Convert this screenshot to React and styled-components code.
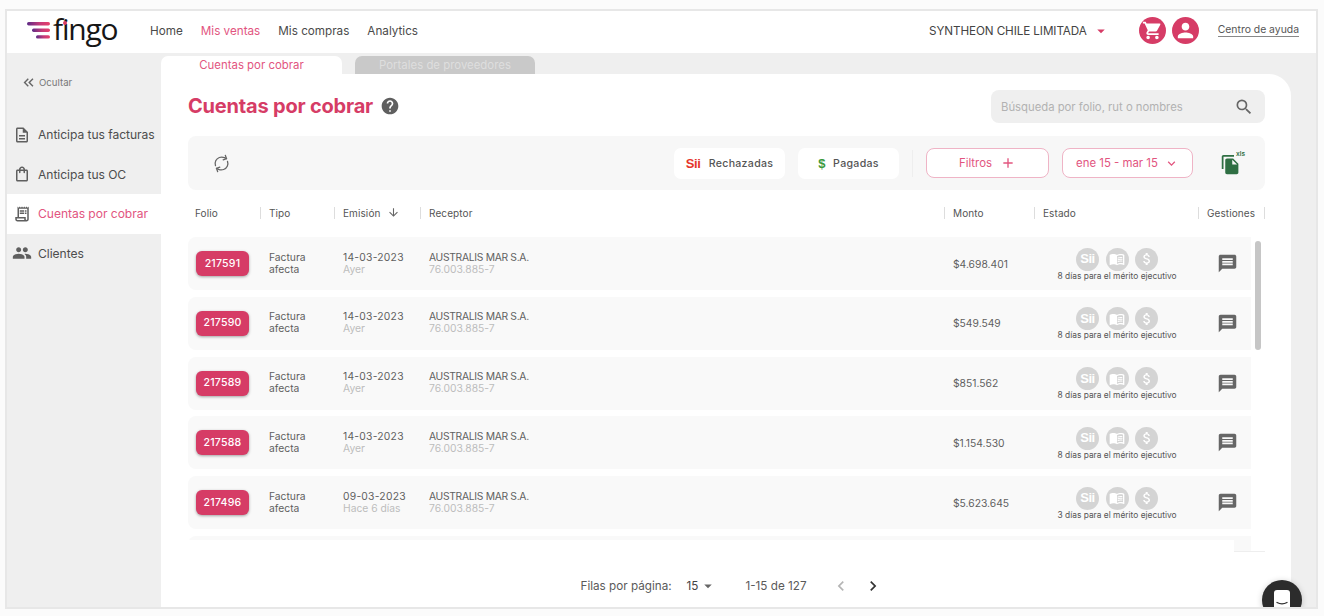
import React from 'react';
import styled, { createGlobalStyle } from 'styled-components';
import { RefreshCw } from 'lucide-react';
import {
  MdHelp, MdOutlineDescription, MdOutlineShoppingBag, MdOutlineReceiptLong, MdPeople,
  MdMessage, MdShoppingCart, MdPerson, MdKeyboardDoubleArrowLeft, MdSearch, MdArrowDownward,
  MdFileCopy, MdMenuBook, MdAttachMoney, MdArrowDropDown, MdExpandMore, MdAdd, MdChevronLeft, MdChevronRight,
} from 'react-icons/md';

const PINK = '#d63c66';
const SOFT_PINK = '#e2557f';

const GlobalStyle = createGlobalStyle`
  html, body {
    margin: 0;
    padding: 0;
    background: #fbfbfb;
    font-family: Inter, "Liberation Sans", sans-serif;
    overflow: hidden;
  }
  * { box-sizing: border-box; }
`;

const Frame = styled.div`
  position: relative;
  margin: 9px 0 0 5px;
  width: 1313px;
  height: 600px;
  border: 2px solid #e7e7e7;
  background: #efefef;
  display: flex;
  flex-direction: column;
  overflow: hidden;
`;

const Header = styled.header`
  height: 42px;
  flex: none;
  background: #fff;
  display: flex;
  align-items: center;
  padding: 0 17px 3px 20px;
`;

const Logo = styled.div`
  position: relative;
  display: flex;
  align-items: center;
  gap: 3px;
  width: 123px;
`;

const LogoText = styled.span`
  font-family: "Open Sans", sans-serif;
  font-size: 30px;
  line-height: 32px;
  letter-spacing: -1.2px;
  color: #161616;
  margin-top: -3px;
`;

const LogoDot = styled.i`
  position: absolute;
  left: 36px;
  top: 5px;
  width: 4px;
  height: 4px;
  border-radius: 50%;
  background: ${PINK};
`;

const Nav = styled.nav`
  display: flex;
  gap: 18px;
`;

const NavLink = styled.a`
  font-size: 11.7px;
  color: ${(p) => (p.$active ? SOFT_PINK : '#4a4a4a')};
`;

const HeaderRight = styled.div`
  margin-left: auto;
  display: flex;
  align-items: center;
`;

const Company = styled.div`
  display: flex;
  align-items: center;
  font-size: 11.7px;
  letter-spacing: -0.1px;
  color: #444;
  margin-right: 29px;
  svg { color: ${PINK}; margin-left: 5px; }
`;

const RoundIcon = styled.span`
  width: 27px;
  height: 27px;
  border-radius: 50%;
  background: ${PINK};
  color: #fff;
  display: flex;
  align-items: center;
  justify-content: center;
  margin-right: 6px;
`;

const HelpLink = styled.a`
  margin-left: 13px;
  font-size: 10.4px;
  color: #555;
  border-bottom: 1px solid #888;
  line-height: 12px;
`;

const Body = styled.div`
  flex: 1;
  display: flex;
  min-height: 0;
`;

const Sidebar = styled.aside`
  width: 154px;
  flex: none;
  padding-top: 19px;
`;

const HideButton = styled.div`
  display: flex;
  align-items: center;
  gap: 2px;
  padding-left: 13px;
  font-size: 9.6px;
  color: #777;
  height: 20px;
  margin-bottom: 23px;
  svg { color: #666; }
`;

const SideItem = styled.div`
  height: 39.5px;
  display: flex;
  align-items: center;
  gap: 7px;
  padding-left: 6px;
  font-size: 12.1px;
  letter-spacing: -0.05px;
  color: ${(p) => (p.$active ? SOFT_PINK : '#4d4d4d')};
  background: ${(p) => (p.$active ? '#fff' : 'transparent')};
  svg { color: #5f5f5f; flex: none; }
`;

const ClientsIcon = styled(MdPeople)`
  margin: 0 -1px;
`;

const Content = styled.div`
  width: 1130px;
  flex: none;
  display: flex;
  flex-direction: column;
  padding-top: 3px;
`;

const Tabs = styled.div`
  display: flex;
  gap: 13px;
  height: 18px;
  flex: none;
`;

const Tab = styled.div`
  width: ${(p) => (p.$active ? 181 : 180)}px;
  border-radius: 7px 7px 0 0;
  background: ${(p) => (p.$active ? '#fff' : '#c9c9c9')};
  color: ${(p) => (p.$active ? SOFT_PINK : '#dedede')};
  font-size: 11.4px;
  display: flex;
  align-items: center;
  justify-content: center;
`;

const Card = styled.main`
  flex: 1;
  min-height: 0;
  background: #fff;
  border-radius: 0 22px 0 0;
  padding: 16px 26px 0 27px;
  display: flex;
  flex-direction: column;
`;

const TitleRow = styled.div`
  display: flex;
  align-items: center;
  justify-content: space-between;
  height: 33px;
  flex: none;
`;

const Title = styled.h1`
  margin: -2px 0 0;
  display: flex;
  align-items: center;
  gap: 7px;
  font-size: 20px;
  font-weight: 700;
  letter-spacing: -0.2px;
  color: ${PINK};
  svg { color: #5f5f5f; }
`;

const Search = styled.div`
  width: 274px;
  height: 33px;
  border-radius: 8px;
  background: #efefef;
  display: flex;
  align-items: center;
  justify-content: space-between;
  padding: 0 11px 0 10px;
  font-size: 11.3px;
  color: #b2b2b2;
  svg { color: #666; }
`;

const Toolbar = styled.div`
  margin-top: 13px;
  height: 54px;
  flex: none;
  border-radius: 8px;
  background: #f7f7f7;
  display: flex;
  align-items: center;
  padding: 0 20px 0 25px;
  svg { flex: none; }
`;

const RefreshIcon = styled(RefreshCw)`
  color: #666;
  margin-right: auto;
  transform: rotate(-20deg);
`;

const QuickFilter = styled.div`
  height: 31px;
  width: ${(p) => p.$w}px;
  border-radius: 7px;
  background: #fff;
  margin-right: 13px;
  display: flex;
  align-items: center;
  justify-content: center;
  gap: 8px;
  font-size: 10.6px;
  font-weight: 500;
  letter-spacing: 0.3px;
  color: #555;
`;

const SiiMark = styled.b`
  font-family: "Liberation Sans", sans-serif;
  font-size: 13px;
  font-weight: 700;
  letter-spacing: -0.3px;
  color: ${(p) => p.$color};
`;

const Divider = styled.span`
  width: 1px;
  height: 27px;
  background: #eee;
  margin-right: 13px;
`;

const OutlineButton = styled.div`
  height: 30px;
  width: ${(p) => p.$w}px;
  border: 1.3px solid #efb4c6;
  border-radius: 8px;
  background: #fff;
  color: ${SOFT_PINK};
  margin-right: 13px;
  display: flex;
  align-items: center;
  justify-content: center;
  gap: ${(p) => p.$gap}px;
  font-size: 11.4px;
`;

const DateButton = styled(OutlineButton)`
  margin-right: 14px;
`;

const XlsIcon = styled.div`
  position: relative;
  width: 25px;
  height: 24px;
  margin-left: 13px;
  color: #2f6f43;
  display: flex;
  align-items: flex-end;
`;

const XlsLabel = styled.span`
  position: absolute;
  top: -1px;
  right: 0;
  font-size: 6.5px;
  font-weight: 600;
`;

const columns = '73px 74px 86px 524px 90px 164px';

const TableHead = styled.div`
  display: grid;
  grid-template-columns: ${columns} 66px;
  height: 47px;
  flex: none;
  align-items: center;
  padding-bottom: 2px;
`;

const HeadCell = styled.div`
  display: flex;
  align-items: center;
  gap: 6px;
  height: 12px;
  padding-left: ${(p) => (p.$first ? 7 : 8)}px;
  border-right: 1px solid #ddd;
  font-size: 10px;
  letter-spacing: 0.1px;
  color: #555;
  svg { color: #666; }
`;

const TableBody = styled.div`
  position: relative;
  height: 315px;
  flex: none;
  overflow: hidden;
`;

const Rows = styled.div`
  width: 1063px;
  display: flex;
  flex-direction: column;
  gap: 6.8px;
`;

const Row = styled.div`
  height: 53px;
  flex: none;
  border-radius: 8px 0 0 8px;
  background: #f9f9f9;
  display: grid;
  grid-template-columns: ${columns} 52px;
  align-items: center;
  font-size: 10.3px;
  line-height: 12px;
  color: #5f5f5f;
`;

const FolioCell = styled.div`
  padding-left: 8px;
`;

const FolioButton = styled.div`
  width: 53px;
  height: 25px;
  border-radius: 6px;
  background: ${PINK};
  color: #fff;
  font-size: 10.6px;
  font-weight: 500;
  letter-spacing: 0.2px;
  display: flex;
  align-items: center;
  justify-content: center;
  box-shadow: 0 1px 3px rgba(0, 0, 0, 0.35);
`;

const TextCell = styled.div`
  padding-left: 8px;
  margin-top: -2px;
  letter-spacing: ${(p) => p.$spacing || 0}px;
`;

const AmountCell = styled.div`
  padding-left: 8px;
`;

const SubText = styled.div`
  color: #bdbdbd;
  letter-spacing: 0;
`;

const StatusCell = styled.div`
  display: flex;
  flex-direction: column;
  align-items: center;
  padding-top: 1px;
`;

const StatusIcons = styled.div`
  display: flex;
  gap: 6.5px;
`;

const StatusIcon = styled.span`
  width: 23px;
  height: 23px;
  border-radius: 50%;
  background: #d4d4d4;
  color: #fff;
  display: flex;
  align-items: center;
  justify-content: center;
  font-family: "Liberation Sans", sans-serif;
  font-size: 13px;
  font-weight: 700;
  letter-spacing: -0.5px;
`;

const StatusText = styled.div`
  font-size: 8.4px;
  line-height: 10px;
  color: #555;
  white-space: nowrap;
`;

const ChatCell = styled.div`
  display: flex;
  justify-content: center;
  padding-left: 5px;
  color: #666;
`;

const ScrollThumb = styled.div`
  position: absolute;
  left: 1067px;
  top: 4px;
  width: 6px;
  height: 109px;
  border-radius: 3px;
  background: #c6c6c6;
`;

const FooterMask = styled.div`
  position: absolute;
  left: 0;
  bottom: 0;
  width: 1046px;
  height: 12px;
  background: #fff;
`;

const ScrollEnd = styled.div`
  position: absolute;
  right: 0;
  bottom: 0;
  width: 31px;
  height: 1px;
  background: #eee;
`;

const Pagination = styled.div`
  flex: 1;
  display: flex;
  align-items: center;
  justify-content: center;
  padding: 13px 0 0 10px;
  font-size: 11.7px;
  color: #5a5a5a;
`;

const PageSize = styled.span`
  display: flex;
  align-items: center;
  margin: 0 28px 0 15px;
  color: #444;
  svg { color: #666; margin-left: 1px; }
`;

const PageArrow = styled.span`
  display: flex;
  margin-left: ${(p) => p.$gap}px;
  color: ${(p) => (p.$off ? '#b5b5b5' : '#333')};
`;

const ChatBubble = styled.div`
  position: absolute;
  right: 14px;
  bottom: -13px;
  width: 40px;
  height: 40px;
  border-radius: 50%;
  background: #2c2c2c;
  box-shadow: 0 1px 6px rgba(0, 0, 0, 0.2);
  display: flex;
  justify-content: center;
  padding-top: 10px;
`;

const rows = [
  { folio: '217591', date: '14-03-2023', when: 'Ayer', amount: '$4.698.401', days: 8 },
  { folio: '217590', date: '14-03-2023', when: 'Ayer', amount: '$549.549', days: 8 },
  { folio: '217589', date: '14-03-2023', when: 'Ayer', amount: '$851.562', days: 8 },
  { folio: '217588', date: '14-03-2023', when: 'Ayer', amount: '$1.154.530', days: 8 },
  { folio: '217496', date: '09-03-2023', when: 'Hace 6 días', amount: '$5.623.645', days: 3 },
];

function LogoStripes() {
  return (
    <svg width="23" height="17" viewBox="0 0 23 17">
      <defs>
        <linearGradient id="stripe" x1="0" x2="1" y1="0" y2="0">
          <stop offset="0" stopColor="#5b2a86" />
          <stop offset="0.55" stopColor="#c43a78" />
          <stop offset="1" stopColor="#e8406a" />
        </linearGradient>
      </defs>
      <rect x="0" y="0" width="23" height="3.4" rx="1.7" fill="url(#stripe)" />
      <rect x="5" y="6.6" width="18" height="3.4" rx="1.7" fill="url(#stripe)" />
      <rect x="9" y="13.2" width="14" height="3.4" rx="1.7" fill="url(#stripe)" />
    </svg>
  );
}

function BubbleIcon() {
  return (
    <svg width="16" height="24" viewBox="0 0 16 24">
      <rect width="16" height="24" rx="3" fill="#fff" />
      <path d="M3 12.5c3 1.6 7 1.6 10 0" fill="none" stroke="#2c2c2c" strokeWidth="1.3" strokeLinecap="round" />
    </svg>
  );
}

function App() {
  return (
    <>
      <GlobalStyle />
      <Frame>
        <Header>
          <Logo>
            <LogoStripes />
            <LogoText>fingo</LogoText>
            <LogoDot />
          </Logo>
          <Nav>
            <NavLink>Home</NavLink>
            <NavLink $active>Mis ventas</NavLink>
            <NavLink>Mis compras</NavLink>
            <NavLink>Analytics</NavLink>
          </Nav>
          <HeaderRight>
            <Company>
              SYNTHEON CHILE LIMITADA <MdArrowDropDown size={18} />
            </Company>
            <RoundIcon><MdShoppingCart size={21} /></RoundIcon>
            <RoundIcon><MdPerson size={23} /></RoundIcon>
            <HelpLink>Centro de ayuda</HelpLink>
          </HeaderRight>
        </Header>
        <Body>
          <Sidebar>
            <HideButton><MdKeyboardDoubleArrowLeft size={17} /> Ocultar</HideButton>
            <SideItem><MdOutlineDescription size={18} /> Anticipa tus facturas</SideItem>
            <SideItem><MdOutlineShoppingBag size={18} /> Anticipa tus OC</SideItem>
            <SideItem $active><MdOutlineReceiptLong size={18} /> Cuentas por cobrar</SideItem>
            <SideItem><ClientsIcon size={20} /> Clientes</SideItem>
          </Sidebar>
          <Content>
            <Tabs>
              <Tab $active>Cuentas por cobrar</Tab>
              <Tab>Portales de proveedores</Tab>
            </Tabs>
            <Card>
              <TitleRow>
                <Title>Cuentas por cobrar <MdHelp size={20} /></Title>
                <Search>Búsqueda por folio, rut o nombres <MdSearch size={20} /></Search>
              </TitleRow>
              <Toolbar>
                <RefreshIcon size={17} strokeWidth={1.8} />
                <QuickFilter $w={111}><SiiMark $color="#e5342a">Sii</SiiMark> Rechazadas</QuickFilter>
                <QuickFilter $w={101}><SiiMark $color="#3c9a3c">$</SiiMark> Pagadas</QuickFilter>
                <Divider />
                <OutlineButton $w={123} $gap={8}>Filtros <MdAdd size={16} /></OutlineButton>
                <DateButton $w={131} $gap={6}>ene 15 - mar 15 <MdExpandMore size={15} /></DateButton>
                <XlsIcon>
                  <MdFileCopy size={21} />
                  <XlsLabel>xls</XlsLabel>
                </XlsIcon>
              </Toolbar>
              <TableHead>
                <HeadCell $first>Folio</HeadCell>
                <HeadCell>Tipo</HeadCell>
                <HeadCell>Emisión <MdArrowDownward size={13} /></HeadCell>
                <HeadCell>Receptor</HeadCell>
                <HeadCell>Monto</HeadCell>
                <HeadCell>Estado</HeadCell>
                <HeadCell>Gestiones</HeadCell>
              </TableHead>
              <TableBody>
                <Rows>
                  {rows.map((row) => (
                    <Row key={row.folio}>
                      <FolioCell><FolioButton>{row.folio}</FolioButton></FolioCell>
                      <TextCell>Factura<br />afecta</TextCell>
                      <TextCell $spacing={0.25}>{row.date}<SubText>{row.when}</SubText></TextCell>
                      <TextCell $spacing={-0.3}>AUSTRALIS MAR S.A.<SubText>76.003.885-7</SubText></TextCell>
                      <AmountCell>{row.amount}</AmountCell>
                      <StatusCell>
                        <StatusIcons>
                          <StatusIcon>Sii</StatusIcon>
                          <StatusIcon><MdMenuBook size={16} /></StatusIcon>
                          <StatusIcon><MdAttachMoney size={16} /></StatusIcon>
                        </StatusIcons>
                        <StatusText>{row.days} días para el mérito ejecutivo</StatusText>
                      </StatusCell>
                      <ChatCell><MdMessage size={21} /></ChatCell>
                    </Row>
                  ))}
                  <Row />
                </Rows>
                <FooterMask />
                <ScrollThumb />
                <ScrollEnd />
              </TableBody>
              <Pagination>
                Filas por página:
                <PageSize>15 <MdArrowDropDown size={18} /></PageSize>
                1-15 de 127
                <PageArrow $off $gap={24}><MdChevronLeft size={20} /></PageArrow>
                <PageArrow $gap={12}><MdChevronRight size={20} /></PageArrow>
              </Pagination>
            </Card>
          </Content>
        </Body>
        <ChatBubble><BubbleIcon /></ChatBubble>
      </Frame>
    </>
  );
}

export default App;
